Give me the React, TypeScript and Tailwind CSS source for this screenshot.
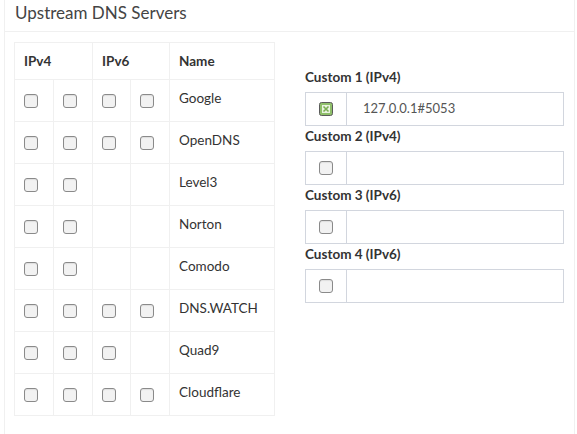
import React from "react";

const Box = () => (
  <span className="block w-[14px] h-[14px] rounded-[3px] border border-[#8a8a8a] bg-[#f2f2f2] shadow-[inset_0_1px_1px_rgba(0,0,0,0.08)]" />
);

const Checked = () => (
  <svg width="14" height="14" viewBox="0 0 14 14" className="block">
    <rect x="0.5" y="0.5" width="13" height="13" rx="2" fill="#8fbf6a" stroke="#5a5a5a" />
    <rect x="3" y="3" width="8" height="8" fill="#e9f3df" />
    <path d="M4.5 4.5 L9.5 9.5 M9.5 4.5 L4.5 9.5" stroke="#7aae52" strokeWidth="1.6" />
  </svg>
);

const rows: [string, boolean[]][] = [
  ["Google", [true, true, true, true]],
  ["OpenDNS", [true, true, true, true]],
  ["Level3", [true, true, false, false]],
  ["Norton", [true, true, false, false]],
  ["Comodo", [true, true, false, false]],
  ["DNS.WATCH", [true, true, true, true]],
  ["Quad9", [true, true, true, false]],
  ["Cloudflare", [true, true, true, true]],
];

const customs = [
  { label: "Custom 1 (IPv4)", checked: true, value: "127.0.0.1#5053" },
  { label: "Custom 2 (IPv4)", checked: false, value: "" },
  { label: "Custom 3 (IPv6)", checked: false, value: "" },
  { label: "Custom 4 (IPv6)", checked: false, value: "" },
];

export default function App() {
  return (
    <div
      className="w-[577px] h-[434px] bg-white overflow-hidden text-[#333]"
      style={{ fontFamily: "Lato, 'Liberation Sans', sans-serif" }}
    >
      <div className="ml-[4px] mr-[2px] h-[440px] border-x border-[#f0f0f0]">
        <div className="h-[32px] border-b border-[#f0f0f0] pl-[10px]">
          <h3 className="text-[17px] leading-[25px] text-[#444] m-0">Upstream DNS Servers</h3>
        </div>
        <div className="flex pl-[9px] pt-[10px]">
          <table className="w-[260px] border-collapse text-[13.5px] table-fixed">
            <colgroup>
              <col className="w-[39px]" />
              <col className="w-[39px]" />
              <col className="w-[38px]" />
              <col className="w-[39px]" />
              <col className="w-[105px]" />
            </colgroup>
            <thead>
              <tr className="h-[37px]">
                <th colSpan={2} className="border border-[#f0f0f0] text-left font-bold pl-[9px]">IPv4</th>
                <th colSpan={2} className="border border-[#f0f0f0] text-left font-bold pl-[9px]">IPv6</th>
                <th className="border border-[#f0f0f0] text-left font-bold pl-[9px]">Name</th>
              </tr>
            </thead>
            <tbody>
              {rows.map(([name, boxes]) => (
                <tr key={name} className="h-[42px]">
                  {boxes.map((b, i) => (
                    <td key={i} className="border border-[#f0f0f0] pl-[9px] align-middle">
                      {b ? <Box /> : null}
                    </td>
                  ))}
                  <td className="border border-[#f0f0f0] pl-[9px] align-middle pb-[4px]">{name}</td>
                </tr>
              ))}
            </tbody>
          </table>
          <div className="ml-[30px] mt-[25px] w-[259px]">
            {customs.map((c) => (
              <div key={c.label}>
                <div className="h-[20px] mb-[5px] text-[13.5px] font-bold leading-[20px]">{c.label}</div>
                <div className="flex h-[34px] border border-[#d2d6de]">
                  <div className="w-[41px] border-r border-[#d2d6de] flex items-center justify-center">
                    {c.checked ? <Checked /> : <Box />}
                  </div>
                  <div className="flex-1 flex items-center pl-[16px] text-[13px] text-[#555]">{c.value}</div>
                </div>
              </div>
            ))}
          </div>
        </div>
      </div>
    </div>
  );
}
